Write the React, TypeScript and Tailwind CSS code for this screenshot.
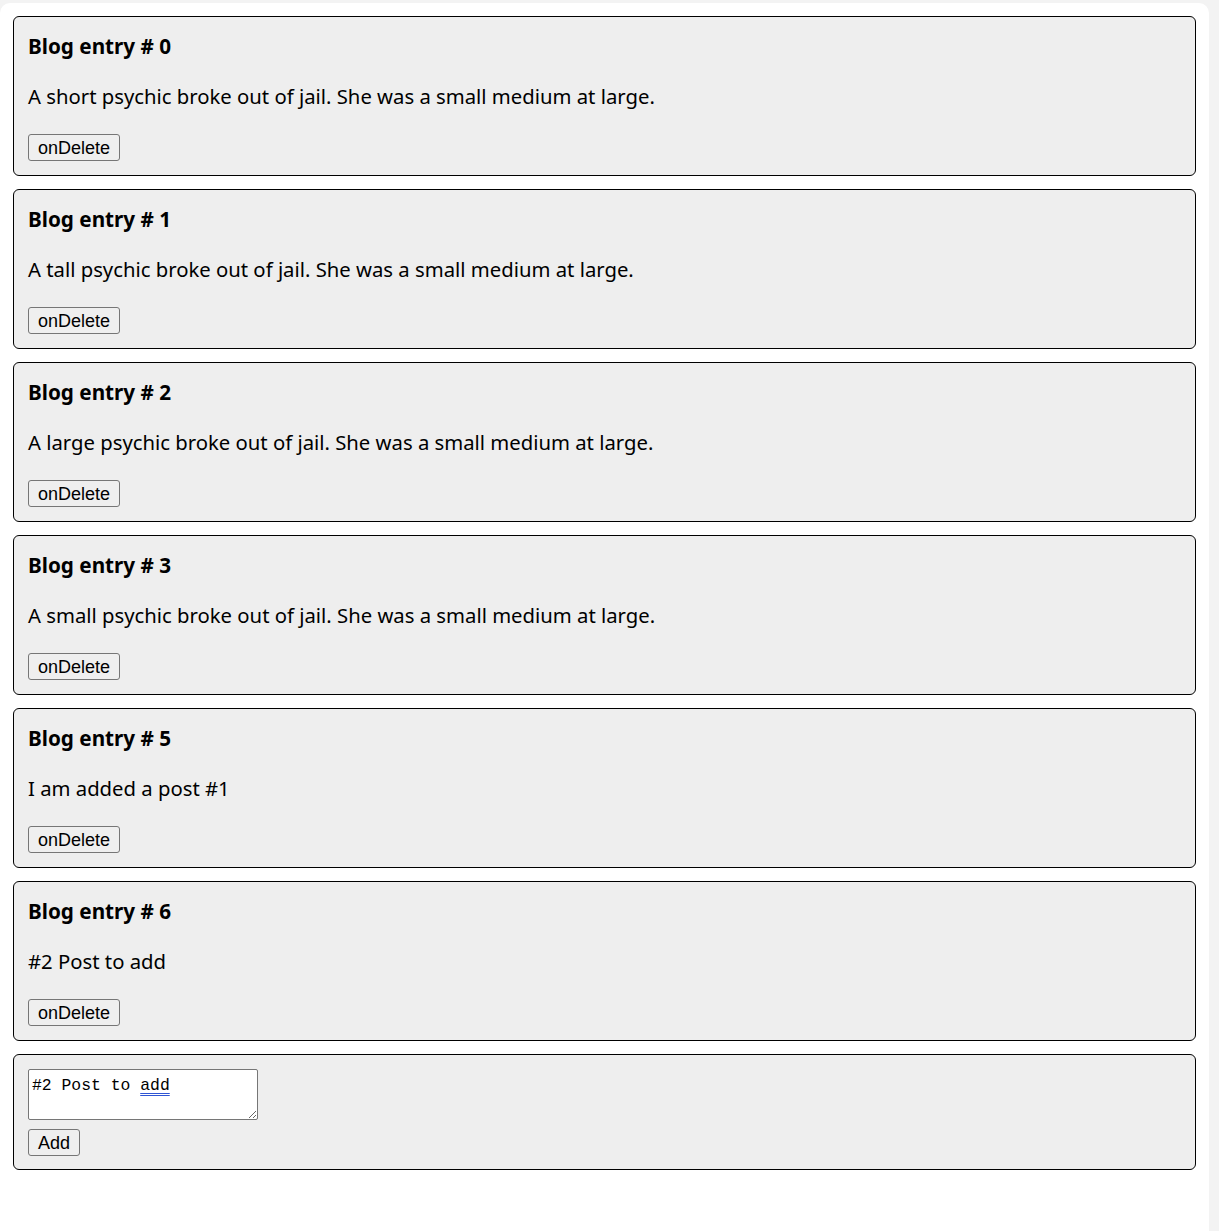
import React from "react";

const posts = [
  { id: 0, text: "A short psychic broke out of jail. She was a small medium at large." },
  { id: 1, text: "A tall psychic broke out of jail. She was a small medium at large." },
  { id: 2, text: "A large psychic broke out of jail. She was a small medium at large." },
  { id: 3, text: "A small psychic broke out of jail. She was a small medium at large." },
  { id: 5, text: "I am added a post #1" },
  { id: 6, text: "#2 Post to add" },
];

const btn =
  "h-[27px] px-[9px] border border-[#767676] rounded-[3px] bg-[#efefef] text-[18px] leading-none text-black font-['Liberation_Sans',Arial,sans-serif]";

export default function App() {
  return (
    <div className="min-h-[1231px] bg-[#f3f3f3] pt-[3px] pr-[10px]">
      <div className="min-h-[1228px] bg-white rounded-tr-[10px] rounded-tl-[10px] pl-[13px] pr-[13px] pt-[13px] flex flex-col gap-[13px] font-['Noto_Sans',sans-serif] text-black">
        {posts.map((p) => (
          <div
            key={p.id}
            className="h-[160px] border border-black rounded-[6px] bg-[#eeeeee] px-[14px] pt-[13px] flex flex-col items-start"
          >
            <div className="text-[20.7px] leading-[32px] font-bold">Blog entry # {p.id}</div>
            <div className="mt-[20px] text-[20.3px] leading-[28px]">{p.text}</div>
            <button className={"mt-[24px] " + btn}>onDelete</button>
          </div>
        ))}
        <div className="h-[116px] border border-black rounded-[6px] bg-[#eeeeee] px-[14px] pt-[14px] flex flex-col items-start">
          <div
            role="textbox"
            contentEditable
            suppressContentEditableWarning
            className="w-[230px] h-[51px] bg-white border border-[#767676] rounded-[2px] px-[3px] pt-[6px] text-[16.4px] leading-[20px] font-['Liberation_Mono',monospace] resize-y overflow-auto outline-none whitespace-pre"
          >
            #2 Post to{" "}
            <span className="underline decoration-double decoration-[#2f55d4] underline-offset-[3px] decoration-[1px]">add</span>
          </div>
          <button className={"mt-[9px] " + btn}>Add</button>
        </div>
      </div>
    </div>
  );
}
